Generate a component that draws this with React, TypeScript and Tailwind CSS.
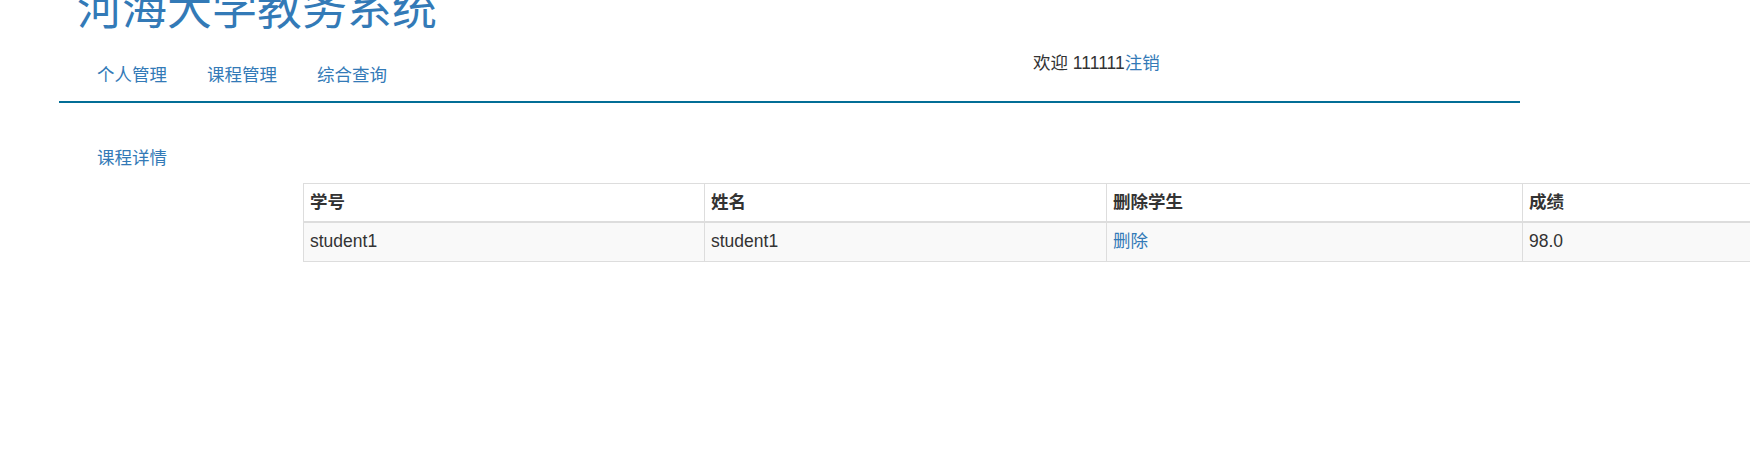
import React from "react";

export default function App() {
  const rows = [{ id: "student1", name: "student1", score: "98.0" }];
  return (
    <div className="w-full overflow-hidden bg-white text-[#333] text-[17.5px] leading-[25px] font-['Liberation_Sans','Noto_Sans_CJK_SC',sans-serif]">
      <div className="ml-[59px] w-[1461px] border-b-2 border-[#036e96]">
        <div className="pl-[18px]">
          <h1 className="-mt-[15px] h-[50px] text-[45px] leading-[50px] font-normal text-[#337ab7]">
            河海大学教务系统
          </h1>
        </div>
        <div className="flex h-[66px] items-start">
          <ul className="flex pl-[18px] pt-[27.5px]">
            {["个人管理", "课程管理", "综合查询"].map((t) => (
              <li key={t}>
                <a href="#" className="block px-[20px] text-[#337ab7]">
                  {t}
                </a>
              </li>
            ))}
          </ul>
          <div className="ml-[626px] pt-[16px]">
            欢迎 111111<a href="#" className="text-[#337ab7]">注销</a>
          </div>
        </div>
      </div>
      <div className="ml-[97px] mt-[42.5px]">
        <a href="#" className="text-[#337ab7]">课程详情</a>
      </div>
      <div className="ml-[303px] mt-[12.5px]">
        <table className="w-[1620px] table-fixed border-collapse">
          <colgroup>
            <col className="w-[401px]" />
            <col className="w-[402px]" />
            <col className="w-[416px]" />
            <col className="w-[401px]" />
          </colgroup>
          <thead>
            <tr className="bg-white">
              {["学号", "姓名", "删除学生", "成绩"].map((h) => (
                <th
                  key={h}
                  className="border border-b-2 border-[#ddd] px-[6px] py-[6px] text-left font-bold"
                >
                  {h}
                </th>
              ))}
            </tr>
          </thead>
          <tbody>
            {rows.map((r) => (
              <tr key={r.id} className="bg-[#f9f9f9]">
                <td className="border border-[#ddd] px-[6px] pt-[6px] pb-[7px]">{r.id}</td>
                <td className="border border-[#ddd] px-[6px] pt-[6px] pb-[7px]">{r.name}</td>
                <td className="border border-[#ddd] px-[6px] pt-[6px] pb-[7px]">
                  <a href="#" className="text-[#337ab7]">删除</a>
                </td>
                <td className="border border-[#ddd] px-[6px] pt-[6px] pb-[7px]">{r.score}</td>
              </tr>
            ))}
          </tbody>
        </table>
      </div>
    </div>
  );
}
